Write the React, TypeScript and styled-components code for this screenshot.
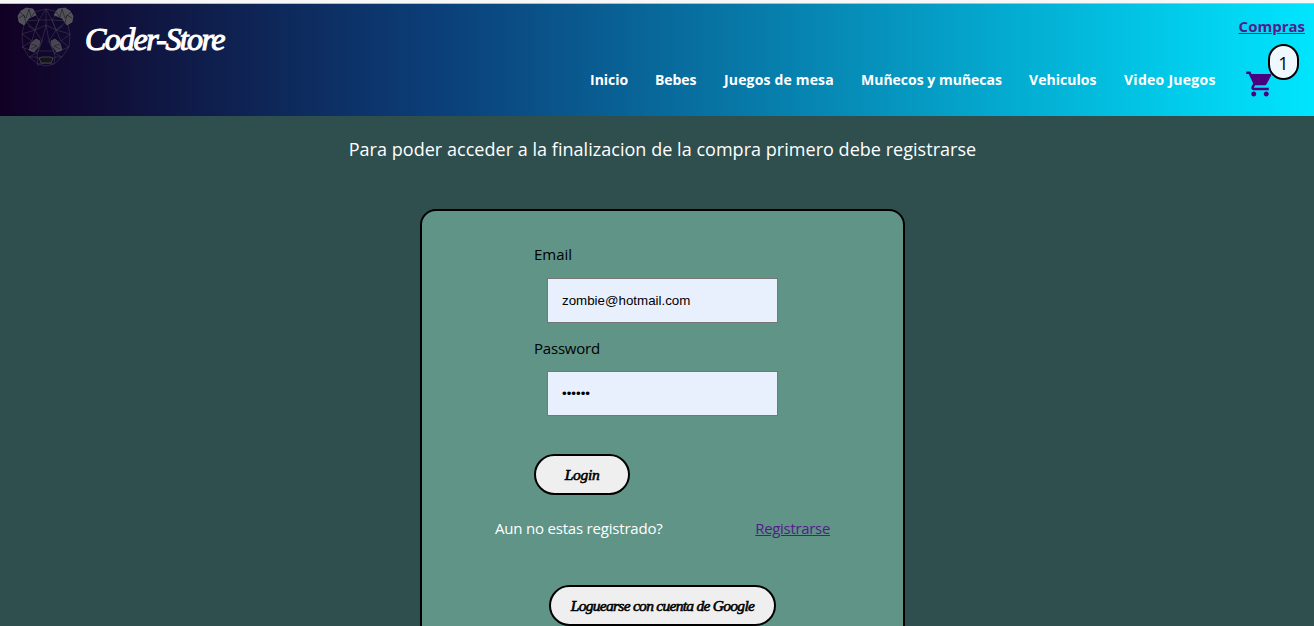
import React from "react";
import styled, { createGlobalStyle } from "styled-components";

const sans = `"Open Sans", "Noto Sans", sans-serif`;
const serif = `"Liberation Serif", serif`;

const GlobalStyle = createGlobalStyle`
  html, body { margin: 0; height: 100%; }
  body { background: #2f4f4f; font-family: ${sans}; overflow: hidden; }
  * { box-sizing: border-box; }
`;

const Page = styled.div`
  height: 626px;
  overflow: hidden;
  display: flex;
  flex-direction: column;
  align-items: center;
`;

const TopEdge = styled.div`
  width: 100%;
  height: 4px;
  flex: none;
  background: #f7f7f7;
  border-bottom: 1px solid #b9bcbc;
`;

const Header = styled.header`
  width: 100%;
  height: 112px;
  flex: none;
  display: flex;
  justify-content: space-between;
  background: linear-gradient(90deg, #120024 0%, #0b407a 34%, #00e5ff 100%);
`;

const Brand = styled.div`
  display: flex;
  height: 64px;
  padding: 2px 0 0 16px;
  gap: 10px;
`;

const Panda = styled.svg`
  width: 59px;
  height: 61px;
  flex: none;
`;

const Title = styled.h1`
  margin: 15px 0 0;
  font: italic 400 32px/36px ${serif};
  letter-spacing: -1.6px;
  -webkit-text-stroke: 1.1px #fff;
  color: #fff;
  white-space: nowrap;
`;

const Right = styled.div`
  display: flex;
`;

const Nav = styled.nav`
  display: flex;
  padding: 66px 0 0;
  gap: 27px;
`;

const NavItem = styled.a<{ $width: number; $spacing: number }>`
  width: ${(p) => p.$width}px;
  height: 20px;
  font-weight: 700;
  font-size: 14px;
  line-height: 20px;
  letter-spacing: ${(p) => p.$spacing}px;
  color: #fff;
  white-space: nowrap;
`;

const CartArea = styled.div`
  width: 97px;
  padding: 12px 9px 0 0;
  display: flex;
  flex-direction: column;
  align-items: flex-end;
`;

const Purchases = styled.a`
  height: 20px;
  font-weight: 700;
  font-size: 15px;
  line-height: 20px;
  color: #551a8b;
  text-decoration: underline;
`;

const Cart = styled.div`
  position: relative;
  width: 60px;
  height: 60px;
  padding-top: 33px;
`;

const CartIcon = styled.svg`
  display: block;
  width: 30px;
  height: 30px;
  fill: #4b0082;
`;

const Badge = styled.span`
  position: absolute;
  left: 23px;
  top: 8px;
  width: 31px;
  height: 36px;
  border: 2px solid #000;
  border-radius: 16px;
  background: #f0f8ff;
  color: #000;
  font-size: 18px;
  line-height: 34px;
  text-align: center;
`;

const Notice = styled.p`
  margin: 20px 0 0 11px;
  height: 26px;
  font-size: 18px;
  line-height: 26px;
  letter-spacing: 0.035px;
  color: #fff;
  white-space: nowrap;
`;

const Card = styled.main`
  width: 485px;
  height: 470px;
  flex: none;
  margin: 47px 0 0 11px;
  padding: 31px 72px 0 73px;
  border: 2px solid #000;
  border-radius: 16px;
  background: #5f9487;
  display: flex;
  flex-direction: column;
`;

const Field = styled.label<{ $gap: number }>`
  display: flex;
  flex-direction: column;
  gap: ${(p) => p.$gap}px;
  height: 94px;
  padding-left: 39px;
  font-size: 15px;
  line-height: 24px;
  color: #000;
`;

const FieldName = styled.span<{ $spacing: number }>`
  letter-spacing: ${(p) => p.$spacing}px;
`;

const Input = styled.input`
  width: 231px;
  height: 45px;
  margin: 0 0 0 13px;
  padding: 0 14px;
  border: 1px solid #767676;
  border-radius: 0;
  outline: none;
  background: #e8f0fe;
  color: #000;
  font: 13.33px "Liberation Sans", Arial, sans-serif;
`;

const Button = styled.button<{ $width: number; $spacing: number }>`
  width: ${(p) => p.$width}px;
  height: 41px;
  flex: none;
  padding: 0;
  border: 2px solid #000;
  border-radius: 21px;
  background: #efefef;
  color: #000;
  font: italic 400 15.5px/20px ${serif};
  letter-spacing: ${(p) => p.$spacing}px;
  -webkit-text-stroke: 0.6px #000;
  white-space: nowrap;
`;

const LoginRow = styled.div`
  padding: 24px 0 0 39px;
  height: 65px;
`;

const RegisterRow = styled.div`
  display: flex;
  justify-content: space-between;
  height: 24px;
  margin: 21px 0 45px;
  padding-right: 1px;
  font-size: 15px;
  line-height: 24px;
  letter-spacing: -0.2px;
  color: #fff;
`;

const RegisterLink = styled.a`
  color: #551a8b;
  letter-spacing: -0.32px;
  text-decoration: underline;
`;

const GoogleRow = styled.div`
  display: flex;
  padding-left: 54px;
`;

const nav = [
  { label: "Inicio", width: 38, spacing: 0 },
  { label: "Bebes", width: 42, spacing: -0.1 },
  { label: "Juegos de mesa", width: 110, spacing: 0.17 },
  { label: "Muñecos y muñecas", width: 141, spacing: 0 },
  { label: "Vehiculos", width: 68, spacing: 0.05 },
  { label: "Video Juegos", width: 93, spacing: 0.27 },
];

function PandaLogo() {
  return (
    <Panda viewBox="0 0 59 61" fill="none">
      <g stroke="#55555f" strokeWidth=".6" opacity=".65">
        <path d="M18 6 30 3l12 3 9 9 3 13-1 13-7 10-8 7-8 2-8-2-9-7-6-10-1-13 3-13z" />
        <path d="M18 6l5 8 7-11 6 11 6-8M23 14h13l4 10-10-5-11 5zM9 15l14-1M51 15l-15-1M9 15l10 9-13 4M51 15 40 24l14 4M6 28l10 7-10 6M54 28l-9 7 8 6M19 24l7 11-5 12-8 4M40 24l-7 11 5 12 8 4M26 35l4-16 3 16M26 35l-4 10h16l-5-10M22 45l-1 6 9 6 9-6-1-6M13 51l8 0 1 9M46 51l-7 0-1 7M22 58l8-1 8 1M12 20l7 4 4-10M47 20l-7 4-4-10M6 41l15 6M53 41l-15 6M30 3v16M16 35l3-11M45 35l-5-11" />
      </g>
      <g fill="#525155" stroke="#66666b" strokeWidth=".6">
        <path d="m5 5 5-3 7 1 3 6-7 3-5 7-5-3-1-6z" />
        <path d="m54 5-5-3-7 1-4 6 8 3 5 7 5-3 1-6z" />
        <path d="m20 33 4 2-1 5-5 6-5-2 2-7z" opacity=".85" />
        <path d="m39 33-4 2 1 5 5 6 5-2-2-7z" opacity=".85" />
      </g>
      <g stroke="#1b1a29" strokeWidth=".6">
        <path d="m4 6 6 6 3-9 2 8 4-5M3 12l5-3 2 8M55 6l-6 6-3-9-2 8-4-5M56 12l-5-3-2 8M15 38l6 2-6 3M44 38l-6 2 6 3" />
      </g>
      <path d="m23 52 3-1h8l3 1-2 5H25z" fill="#161519" stroke="#4c4c50" strokeWidth=".8" />
    </Panda>
  );
}

export default function App() {
  return (
    <Page>
      <GlobalStyle />
      <TopEdge />
      <Header>
        <Brand>
          <PandaLogo />
          <Title>Coder-Store</Title>
        </Brand>
        <Right>
          <Nav>
            {nav.map((n) => (
              <NavItem key={n.label} $width={n.width} $spacing={n.spacing}>
                {n.label}
              </NavItem>
            ))}
          </Nav>
          <CartArea>
            <Purchases>Compras</Purchases>
            <Cart>
              <CartIcon viewBox="0 0 24 24">
                <path d="M7 18c-1.1 0-1.99.9-1.99 2S5.9 22 7 22s2-.9 2-2-.9-2-2-2zM1 2v2h2l3.6 7.59-1.35 2.45c-.16.28-.25.61-.25.96 0 1.1.9 2 2 2h12v-2H7.42c-.14 0-.25-.11-.25-.25l.03-.12.9-1.63h7.45c.75 0 1.41-.41 1.75-1.03l3.58-6.49c.08-.14.12-.31.12-.48 0-.55-.45-1-1-1H5.21l-.94-2H1zm16 16c-1.1 0-1.99.9-1.99 2s.89 2 1.99 2 2-.9 2-2-.9-2-2-2z" />
              </CartIcon>
              <Badge>1</Badge>
            </Cart>
          </CartArea>
        </Right>
      </Header>
      <Notice>Para poder acceder a la finalizacion de la compra primero debe registrarse</Notice>
      <Card>
        <Field $gap={12}>
          <FieldName $spacing={0}>Email</FieldName>
          <Input type="text" defaultValue="zombie@hotmail.com" />
        </Field>
        <Field $gap={11}>
          <FieldName $spacing={-0.2}>Password</FieldName>
          <Input type="password" defaultValue="zombie" />
        </Field>
        <LoginRow>
          <Button $width={96} $spacing={-0.3}>Login</Button>
        </LoginRow>
        <RegisterRow>
          <span>Aun no estas registrado?</span>
          <RegisterLink>Registrarse</RegisterLink>
        </RegisterRow>
        <GoogleRow>
          <Button $width={227} $spacing={-0.72}>Loguearse con cuenta de Google</Button>
        </GoogleRow>
      </Card>
    </Page>
  );
}
